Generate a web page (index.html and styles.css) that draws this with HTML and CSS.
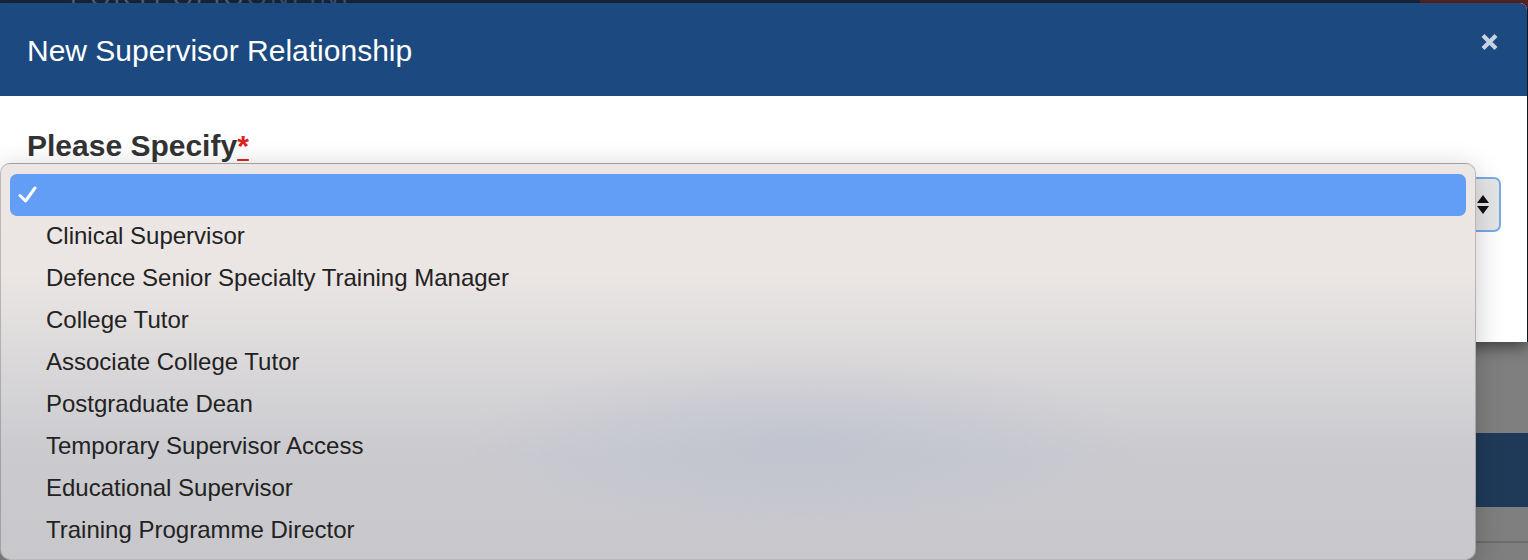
FILE: index.html
```html
<!DOCTYPE html>
<html>
  <head>
    <meta charset="utf-8">
    <title>New Supervisor Relationship</title>
    <link rel="stylesheet" href="styles.css">
  </head>
  <body>
    <div class="page">
      <div class="page-top">
        <div class="topbar">
          <span class="brand">PORTFOLIO<b>ONLINE</b></span>
          <span class="topbar-red"></span>
        </div>
      </div>
      <div class="page-gap"></div>
      <div class="page-band"></div>
      <div class="page-rest"></div>

      <div class="modal">
        <div class="modal-header">
          <h4 class="modal-title">New Supervisor Relationship</h4>
          <button class="close" type="button" aria-label="Close">
            <svg width="19" height="18" viewBox="0 0 19 18">
              <path d="M3 2.5 L16 15.5 M16 2.5 L3 15.5" stroke="#c7d3e3" stroke-width="4.2" stroke-linecap="butt"/>
            </svg>
          </button>
        </div>
        <div class="modal-body">
          <label class="field-label">Please Specify<abbr class="req" title="required">*</abbr></label>
          <div class="select-box">
            <span class="stepper">
              <span class="tri-up"></span>
              <span class="tri-down"></span>
            </span>
          </div>
        </div>
      </div>

      <ul class="popup">
        <li class="opt selected">
          <svg class="check" width="20" height="18" viewBox="0 0 20 18">
            <path d="M2 9.5 L7.5 15 L17 2" fill="none" stroke="#fff" stroke-width="3" stroke-linecap="round" stroke-linejoin="round"/>
          </svg>
        </li>
        <li class="opt">Clinical Supervisor</li>
        <li class="opt">Defence Senior Specialty Training Manager</li>
        <li class="opt">College Tutor</li>
        <li class="opt">Associate College Tutor</li>
        <li class="opt">Postgraduate Dean</li>
        <li class="opt">Temporary Supervisor Access</li>
        <li class="opt">Educational Supervisor</li>
        <li class="opt">Training Programme Director</li>
      </ul>
    </div>
  </body>
</html>
```

FILE: styles.css
```css
html,
body {
  margin: 0;
  padding: 0;
  height: 560px;
  overflow: hidden;
}

body {
  font-family: "Liberation Sans", Arial, sans-serif;
  background-color: #7f7f7f;
}

.page {
  position: relative;
  width: 1528px;
  height: 560px;
  overflow: hidden;
}

/* darkened page behind the modal */
.page-top {
  height: 342px;
  background-color: #101c2c;
  overflow: hidden;
}

.topbar {
  display: flex;
  align-items: flex-end;
  height: 8px;
  background-color: #17263a;
}

.brand {
  flex-shrink: 0;
  margin-left: 70px;
  font-size: 26px;
  line-height: 22px;
  letter-spacing: 3px;
  color: #5d6776;
}

.brand b {
  font-weight: normal;
  color: #3e5677;
}

.topbar-red {
  margin-left: auto;
  width: 108px;
  height: 8px;
  background-color: #5a2420;
}

.page-gap {
  height: 91px;
  background-color: #7f7f7f;
}

.page-band {
  height: 74px;
  background-color: #1f3a59;
}

.page-rest {
  height: 34px;
  background-color: #7f7f7f;
  border-bottom: 2px solid #6c6c6c;
}

/* modal */
.modal {
  position: absolute;
  top: 3px;
  left: 0;
  width: 1527px;
  background-color: #fff;
  border-radius: 0 7px 0 0;
  box-shadow: 0 5px 15px rgba(0, 0, 0, 0.5);
  overflow: hidden;
}

.modal-header {
  display: flex;
  align-items: flex-start;
  height: 93px;
  box-sizing: border-box;
  padding: 31px 27px 0 27px;
  background-color: #1c4a80;
}

.modal-title {
  margin: 0;
  font-size: 30px;
  line-height: 33px;
  font-weight: normal;
  color: #fff;
}

.close {
  margin-left: auto;
  margin-top: -1px;
  margin-right: 1px;
  padding: 0;
  border: 0;
  background: none;
  line-height: 0;
}

.modal-body {
  height: 246px;
  box-sizing: border-box;
  padding: 33px 27px 0 27px;
}

.field-label {
  display: block;
  font-size: 30px;
  line-height: 33px;
  font-weight: bold;
  color: #333;
}

.req {
  color: #e0231c;
  text-decoration: underline;
  text-decoration-thickness: 2px;
  text-underline-offset: 3px;
  border: 0;
}

.select-box {
  display: flex;
  align-items: center;
  justify-content: flex-end;
  height: 55px;
  box-sizing: border-box;
  margin-top: 15px;
  margin-right: -1px;
  padding-right: 10px;
  border: 2px solid #77ace6;
  border-radius: 7px;
  background: linear-gradient(to right, #fdfdfd 80%, #ececec 97%, #e4e4e4);
}

.stepper {
  display: flex;
  flex-direction: column;
  gap: 3px;
}

.tri-up,
.tri-down {
  width: 0;
  height: 0;
  border-left: 6px solid transparent;
  border-right: 6px solid transparent;
}

.tri-up {
  border-bottom: 8px solid #111;
}

.tri-down {
  border-top: 8px solid #111;
}

/* native option popup */
.popup {
  position: absolute;
  top: 163px;
  left: 0;
  width: 1476px;
  height: 397px;
  box-sizing: border-box;
  margin: 0;
  padding: 10px 9px 0 9px;
  list-style: none;
  border: 1px solid rgba(0, 0, 0, 0.2);
  border-radius: 10px;
  box-shadow: 0 6px 28px rgba(0, 0, 0, 0.22);
  background:
    radial-gradient(ellipse 450px 120px at 800px 280px, rgba(186, 192, 207, 0.6), rgba(186, 192, 207, 0) 75%),
    linear-gradient(to bottom, #ece7e5 0, #ebe6e4 110px, #d8d6d8 210px, #cacacf 290px, #c8c8cc 100%);
}

.opt {
  position: relative;
  height: 42px;
  box-sizing: border-box;
  padding-left: 36px;
  padding-bottom: 2px;
  font-size: 24px;
  line-height: 40px;
  color: #222;
  white-space: nowrap;
}

.opt.selected {
  background-color: #639ef6;
  border-radius: 7px;
}

.check {
  position: absolute;
  left: 8px;
  top: 12px;
}
```
